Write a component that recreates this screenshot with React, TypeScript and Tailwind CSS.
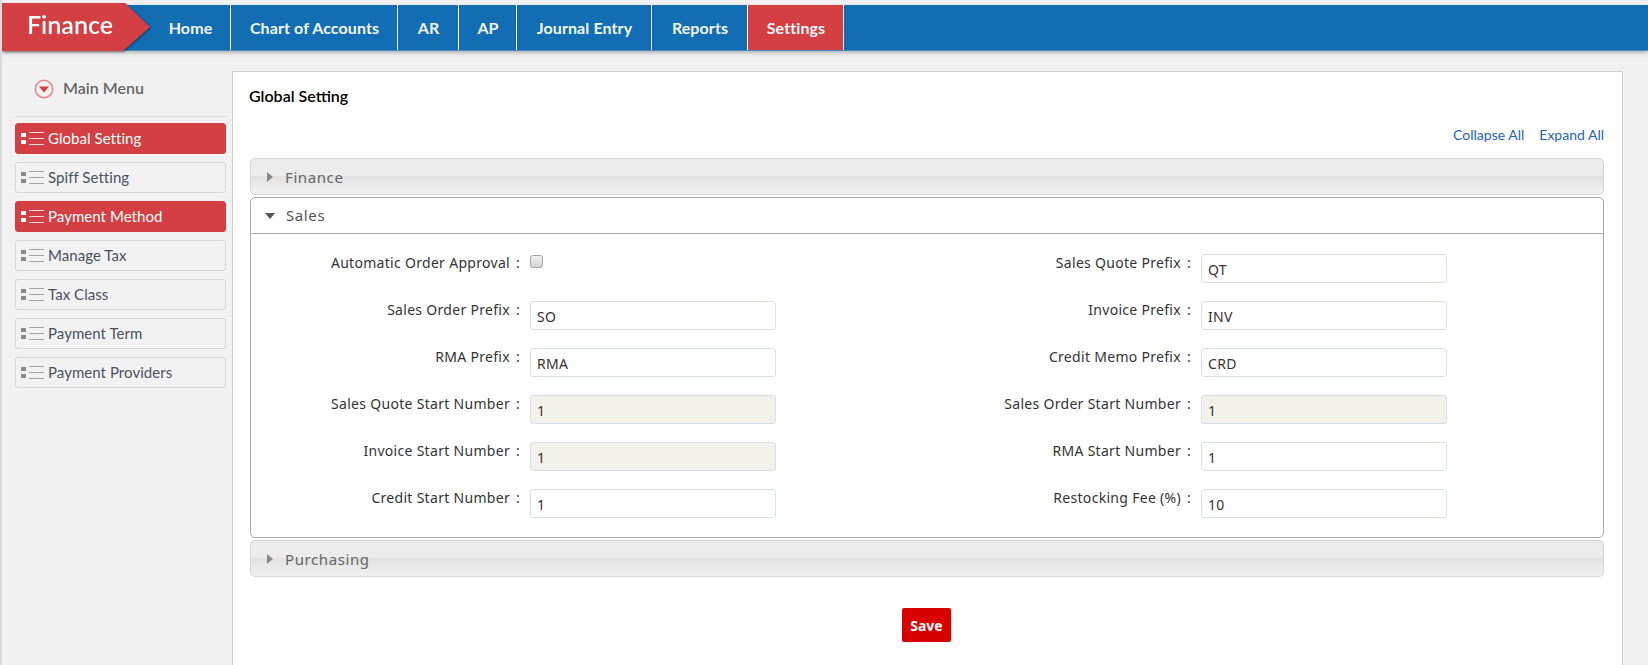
import React from 'react';

const navItems = [
    { label: 'Home', width: 'w-[81px]' },
    { label: 'Chart of Accounts', width: 'w-[167px]' },
    { label: 'AR', width: 'w-[61px]' },
    { label: 'AP', width: 'w-[58px]' },
    { label: 'Journal Entry', width: 'w-[135px]' },
    { label: 'Reports', width: 'w-[96px]' },
    { label: 'Settings', width: 'w-[96px]', active: true },
];

const sideItems = [
    { label: 'Global Setting', active: true },
    { label: 'Spiff Setting' },
    { label: 'Payment Method', active: true },
    { label: 'Manage Tax' },
    { label: 'Tax Class' },
    { label: 'Payment Term' },
    { label: 'Payment Providers' },
];

const rows = [
    { left: 'Automatic Order Approval', leftValue: null, right: 'Sales Quote Prefix', rightValue: 'QT' },
    { left: 'Sales Order Prefix', leftValue: 'SO', right: 'Invoice Prefix', rightValue: 'INV' },
    { left: 'RMA Prefix', leftValue: 'RMA', right: 'Credit Memo Prefix', rightValue: 'CRD' },
    { left: 'Sales Quote Start Number', leftValue: '1', leftOff: true, right: 'Sales Order Start Number', rightValue: '1', rightOff: true },
    { left: 'Invoice Start Number', leftValue: '1', leftOff: true, right: 'RMA Start Number', rightValue: '1' },
    { left: 'Credit Start Number', leftValue: '1', right: 'Restocking Fee (%)', rightValue: '10' },
];

const ListIcon = ({ active }: { active?: boolean }) => (
    <svg width="23" height="15" viewBox="0 0 23 15" className="shrink-0">
        <g fill={active ? '#ffffff' : '#8a8a8a'}>
            <rect x="0" y="2" width="5" height="4" />
            <rect x="0" y="9" width="5" height="4" />
        </g>
        <g fill={active ? '#f7dcdc' : '#a3a3a3'}>
            <rect x="8" y="1" width="15" height="1" />
            <rect x="8" y="7" width="15" height="1" />
            <rect x="8" y="13" width="15" height="1" />
        </g>
    </svg>
);

const Field = ({ value, off }: { value: string; off?: boolean }) => (
    <input
        readOnly
        defaultValue={value}
        className={`h-[29px] w-[246px] rounded-[3px] border border-[#d9dfe8] px-[6px] pt-[1px] text-[14px] tracking-[0.3px] text-[#3a3030] outline-none ${off ? 'bg-[#f2f1ea]' : 'bg-white'}`}
    />
);

const Label = ({ text }: { text: string }) => (
    <div className="-mr-[2px] mt-[1px] h-4 text-right text-[14px] leading-4 tracking-[0.3px] whitespace-pre text-[#333]">
        {text} <span className="ml-[2px]">:</span>
    </div>
);

const ClosedBar = ({ title }: { title: string }) => (
    <div className="flex h-[37px] items-center rounded-[5px] border border-[#d5d5d5] bg-[linear-gradient(#ececec_50%,#e2e2e2_50%,#f1f1f1)] pl-[16px] text-[15px] tracking-[0.6px] text-[#666]">
        <svg width="6" height="10" viewBox="0 0 6 10" className="mr-[12px] shrink-0">
            <path d="M0 0 L6 5 L0 10 Z" fill="#8a8a8a" />
        </svg>
        <span className="pt-[1px]">{title}</span>
    </div>
);

export default function App() {
    return (
        <div className="h-[665px] w-[1648px] overflow-hidden border-l-2 border-[#dcdcdc] bg-[#f3f3f3] bg-[repeating-linear-gradient(0deg,#efefef_0,#efefef_1px,transparent_1px,transparent_4px),repeating-linear-gradient(90deg,#f0f0f0_0,#f0f0f0_1px,transparent_1px,transparent_4px)] font-['Noto_Sans',sans-serif]">
            {/* Top bar */}
            <div className="mt-[5px] flex h-[46px] bg-[#126db2] shadow-[0_2px_4px_rgba(0,0,0,0.25)] font-['Lato',sans-serif] border-b border-[#3f8cc6]">
                <div className="z-10 -mt-[2px] -mb-[1px] h-[48px] w-[148px] shrink-0 drop-shadow-[1px_1px_1px_rgba(0,0,0,0.4)]">
                    <div className="h-full bg-[#d33f42] pl-[25px] pt-[5px] text-[25px] leading-[32px] font-semibold text-white [clip-path:polygon(0_0,123px_0,148px_50%,121px_100%,0_100%)]">
                        Finance
                    </div>
                </div>
                {navItems.map((item) => (
                    <div
                        key={item.label}
                        className={`flex items-center justify-center border-r border-white pl-[1px] text-[16px] tracking-[0.1px] font-bold text-[#f4f8fb] ${item.width} ${item.active ? 'bg-[#d33f42]' : ''}`}
                    >
                        {item.label}
                    </div>
                ))}
            </div>

            <div className="flex items-start pl-[13px] pr-[26px] pt-[20px]">
                {/* Sidebar */}
                <div className="w-[211px] shrink-0 font-['Lato',sans-serif]">
                    <div className="flex h-[46px] items-start border-b border-[#dcdcdc] pl-[19px] pt-[7px]">
                        <svg width="20" height="20" viewBox="0 0 20 20" className="mt-[1px]">
                            <circle cx="10" cy="10" r="8.7" fill="none" stroke="#e58a8a" strokeWidth="1.6" />
                            <path d="M5 7.5 H15 L10 13.5 Z" fill="#d33f42" />
                        </svg>
                        <span className="ml-[9px] text-[16px] leading-5 font-semibold text-[#666]">Main Menu</span>
                    </div>
                    <div className="mt-[6px] flex flex-col gap-[8px]">
                        {sideItems.map((item) => (
                            <div
                                key={item.label}
                                className={`flex h-[31px] items-center gap-[4px] rounded-[3px] border pl-[5px] text-[15px] tracking-[0.05px] ${item.active ? 'border-[#d33f42] bg-[#d33f42] text-white' : 'border-[#d6d6d6] bg-[#f2f2f2] text-[#4a5260]'}`}
                            >
                                <ListIcon active={item.active} />
                                {item.label}
                            </div>
                        ))}
                    </div>
                </div>

                {/* Main panel */}
                <div className="ml-[6px] h-[600px] w-[1391px] shrink-0 border border-[#cfcfcf] bg-white pl-[16px] pr-[17px]">
                    <div className="pt-[14px] font-['Lato',sans-serif] text-[16px] leading-5 font-semibold text-black">Global Setting</div>
                    <div className="mt-[21px] flex justify-end gap-[15px] pr-[1px] font-['Lato',sans-serif] text-[14px] leading-4 text-[#1d63b8]">
                        <span>Collapse All</span>
                        <span>Expand All</span>
                    </div>
                    <div className="ml-[1px] mt-[15px] flex w-[1354px] flex-col gap-[2px]">
                        <ClosedBar title="Finance" />
                        <div className="rounded-[5px] border border-[#a9a9a9]">
                            <div className="flex h-[36px] items-center border-b border-[#a9a9a9] pl-[14px] text-[15px] tracking-[0.6px] text-[#555]">
                                <svg width="10" height="6" viewBox="0 0 10 6" className="mr-[11px] shrink-0">
                                    <path d="M0 0 H10 L5 6 Z" fill="#555" />
                                </svg>
                                Sales
                            </div>
                            <div className="grid grid-cols-[267px_246px_401px_246px] gap-x-3 gap-y-[18px] pb-[19px] pt-[20px]">
                                {rows.map((row) => (
                                    <React.Fragment key={row.left}>
                                        <Label text={row.left} />
                                        {row.leftValue === null ? (
                                            <input type="checkbox" className="mt-[1px] h-[13px] w-[13px] appearance-none rounded-[3px] border border-[#a5a5a5] bg-[linear-gradient(#f2f2f2,#d4d4d4)]" />
                                        ) : (
                                            <Field value={row.leftValue} off={row.leftOff} />
                                        )}
                                        <Label text={row.right} />
                                        <Field value={row.rightValue} off={row.rightOff} />
                                    </React.Fragment>
                                ))}
                            </div>
                        </div>
                        <ClosedBar title="Purchasing" />
                    </div>
                    <div className="mt-[31px] flex justify-center pr-[1px]">
                        <button className="h-[34px] w-[49px] rounded-[2px] bg-[#d90000] text-[14px] font-bold text-white">Save</button>
                    </div>
                </div>
            </div>
        </div>
    );
}
